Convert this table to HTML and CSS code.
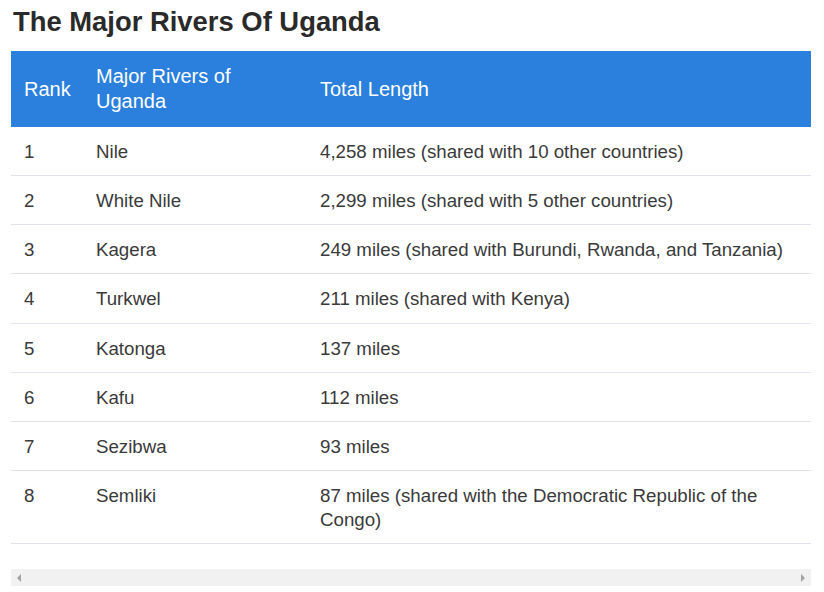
FILE: index.html
```html
<!DOCTYPE html>
<html>
<head>
<meta charset="utf-8">
<link rel="stylesheet" href="styles.css">
</head>
<body>
<h2 class="title">The Major Rivers Of Uganda</h2>
<div class="wrap">
<table class="rivers">
<thead>
<tr><th class="c1">Rank</th><th class="c2">Major Rivers of Uganda</th><th class="c3">Total Length</th></tr>
</thead>
<tbody>
<tr><td>1</td><td>Nile</td><td>4,258 miles (shared with 10 other countries)</td></tr>
<tr><td>2</td><td>White Nile</td><td>2,299 miles (shared with 5 other countries)</td></tr>
<tr><td>3</td><td>Kagera</td><td>249 miles (shared with Burundi, Rwanda, and Tanzania)</td></tr>
<tr><td>4</td><td>Turkwel</td><td>211 miles (shared with Kenya)</td></tr>
<tr><td>5</td><td>Katonga</td><td>137 miles</td></tr>
<tr><td>6</td><td>Kafu</td><td>112 miles</td></tr>
<tr><td>7</td><td>Sezibwa</td><td>93 miles</td></tr>
<tr><td>8</td><td>Semliki</td><td>87 miles (shared with the Democratic Republic of the Congo)</td></tr>
</tbody>
</table>
<div class="scrollbar">
<span class="arrow left"></span>
<span class="arrow right"></span>
</div>
</div>
</body>
</html>
```
FILE: styles.css
```css
html, body {
  margin: 0;
  padding: 0;
  background: #fff;
}
body {
  padding: 0 13px 0 11px;
  font-family: "Liberation Sans", Arial, sans-serif;
  color: #333;
}
.title {
  margin: 0;
  padding: 5px 0 0 2px;
  height: 51px;
  box-sizing: border-box;
  font-size: 27.4px;
  line-height: 34px;
  font-weight: bold;
  color: #2a2a2a;
}
.wrap {
  width: 800px;
}
.rivers {
  width: 800px;
  border-collapse: collapse;
  table-layout: fixed;
  font-size: 18.7px;
  line-height: 24.15px;
  margin-bottom: 25px;
}
.rivers th, .rivers td {
  box-sizing: border-box;
}
.c1 { width: 73px; }
.c2 { width: 224px; }
.c3 { width: 503px; }
.rivers th {
  background: #2b7fdd;
  color: #fff;
  font-weight: normal;
  font-size: 20px;
  line-height: 25px;
  text-align: left;
  padding: 13px 12px 13px 12px;
  vertical-align: middle;
}
.rivers th.c1 { padding-left: 13px; }
.rivers th.c2 { padding-right: 30px; }
.rivers td {
  padding: 13px 12px 11px 12px;
  border-bottom: 1px solid #dfe2e8;
  vertical-align: top;
  color: #3a3a3a;
}
.rivers td:first-child { padding-left: 13px; }
.scrollbar {
  height: 17px;
  background: #f1f1f1;
  display: flex;
  justify-content: space-between;
  align-items: center;
  padding: 0 6px;
}
.arrow {
  width: 0;
  height: 0;
  border-top: 4px solid transparent;
  border-bottom: 4px solid transparent;
}
.arrow.left { border-right: 4px solid #a3a3a3; }
.arrow.right { border-left: 4px solid #a3a3a3; }
```
